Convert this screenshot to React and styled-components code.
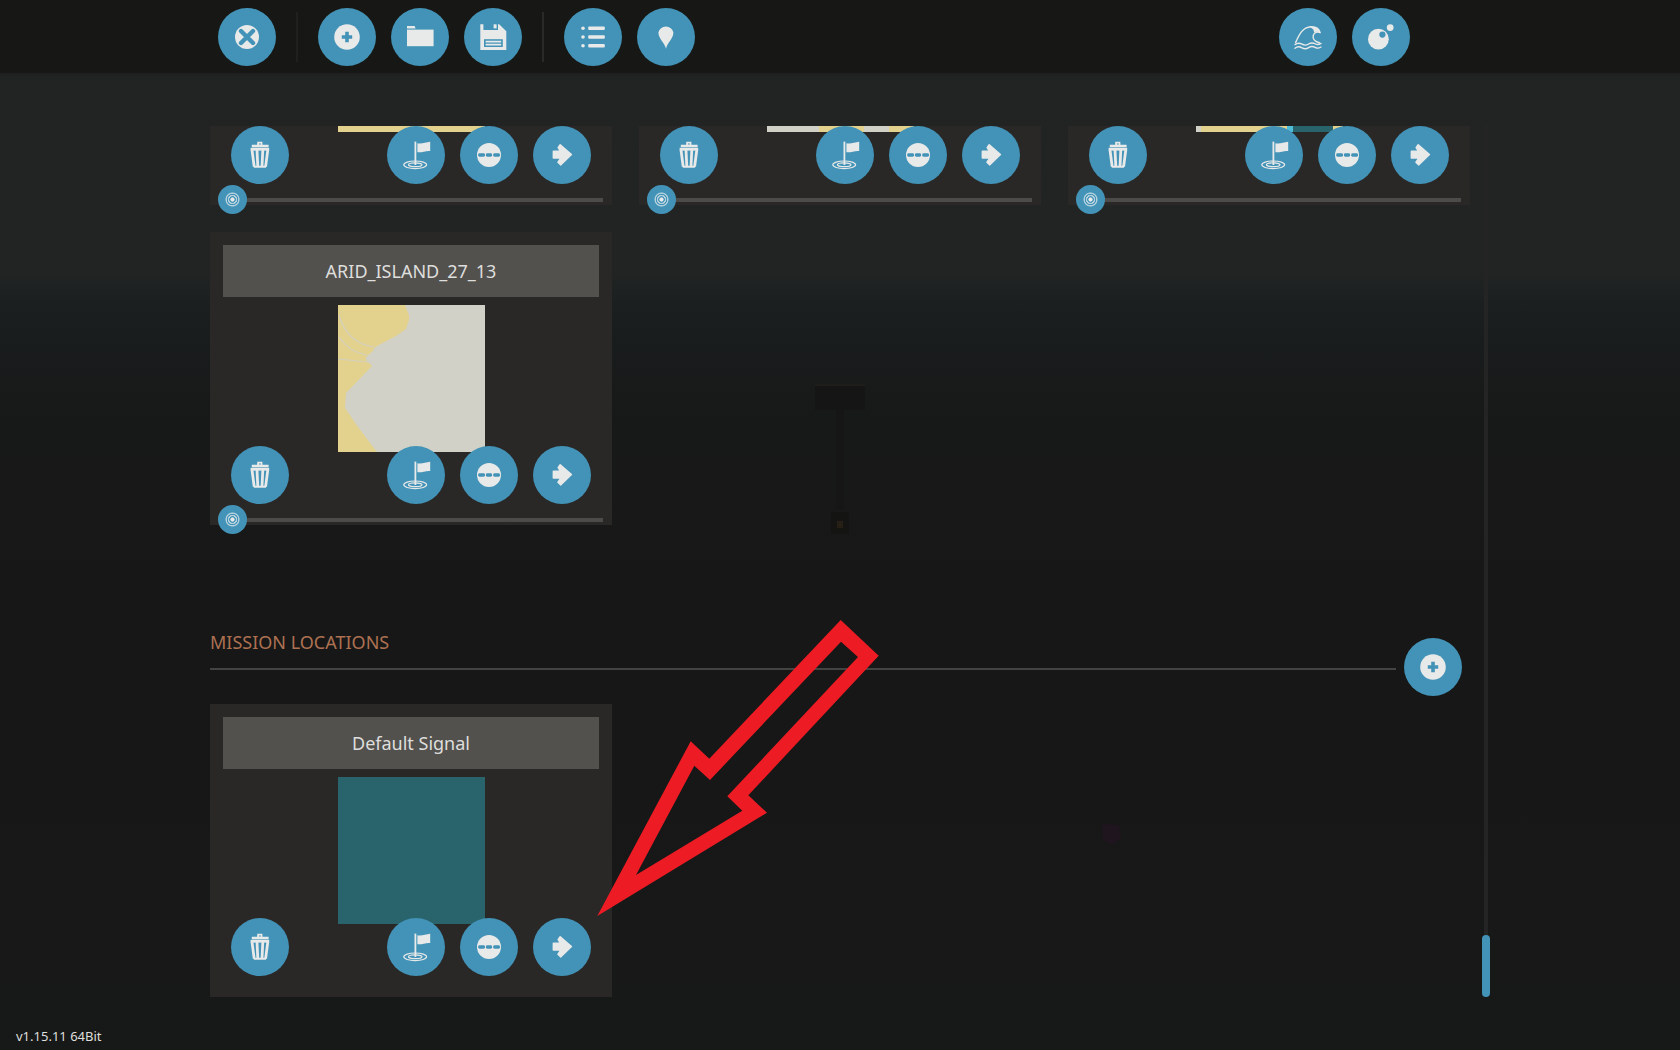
import React from 'react';
import styled, { createGlobalStyle } from 'styled-components';

const BLUE = '#4293b7';
const LIGHT = '#e8e9e9';

const GlobalStyle = createGlobalStyle`
  * {
    box-sizing: border-box;
  }
  body {
    margin: 0;
    background: #171817;
    color: #dededc;
    font-family: 'Noto Sans', sans-serif;
  }
`;

const Page = styled.div`
  position: relative;
  display: flex;
  flex-direction: column;
  height: 100vh;
  overflow: hidden;
  background: linear-gradient(
    #212322 0%,
    #222423 19%,
    #212423 26%,
    #1b1f1f 29%,
    #191c1c 33%,
    #171918 40%,
    #171717 55%,
    #171717 75%,
    #171918 100%
  );
`;

const Scene = styled.svg`
  position: absolute;
  top: 0;
  left: 0;
  width: 100%;
  height: 100%;
`;

const Toolbar = styled.header`
  position: relative;
  display: flex;
  justify-content: space-between;
  padding: 8px calc(12.5% + 60px) 7px calc(12.5% + 8px);
  background: #171815;
  box-shadow: 0 0 3px #1b1c1a;
`;

const ToolGroup = styled.div`
  display: flex;
  align-items: center;
  gap: 15px;
`;

const Divider = styled.span`
  width: 2px;
  height: 50px;
  margin: 0 5px;
  background: ${({ $faint }) => ($faint ? '#20211f' : '#2a2b29')};
`;

const RoundButton = styled.button`
  display: block;
  flex: none;
  width: 58px;
  height: 58px;
  padding: 0;
  border: 0;
  border-radius: 50%;
  background: ${BLUE};
  cursor: pointer;

  svg {
    display: block;
  }
`;

const Main = styled.main`
  position: relative;
  flex: 1;
  min-height: 0;
  display: grid;
  grid-template-columns: 1fr 75% 1fr;
  grid-template-rows: minmax(0, 1fr);
  padding-top: 53px;
`;

// column-reverse keeps the list scrolled to its end when it opens
const ScrollArea = styled.div`
  grid-column: 2;
  display: flex;
  flex-direction: column-reverse;
  overflow-y: auto;
  scrollbar-width: none;
`;

const Rail = styled.div`
  display: flex;
  align-items: flex-end;
  justify-content: center;
  width: 8px;
  margin-left: 12px;
  background: linear-gradient(#242424, #242424) center / 4px 100% no-repeat;
`;

const RailThumb = styled.div`
  width: 8px;
  height: 62px;
  border-radius: 4px;
  background: ${BLUE};
`;

const CardGrid = styled.div`
  display: grid;
  grid-template-columns: repeat(3, 1fr);
  gap: 27px;
`;

const Card = styled.article`
  padding: 13px 13px 21px;
  background: #2a2827;
`;

const NameInput = styled.input`
  display: block;
  width: 100%;
  height: 52px;
  padding: 0 12px;
  border: 0;
  background: #53514e;
  color: #dededc;
  font-family: inherit;
  font-size: 18px;
  text-align: center;
`;

const TileMap = styled.svg`
  display: block;
  width: 147px;
  height: 147px;
  margin: 8px auto -6px;
`;

const CardActions = styled.div`
  position: relative;
  display: flex;
  gap: 15px;
  padding: 0 8px;

  button:first-child {
    margin-right: auto;
  }
`;

const Slider = styled.input`
  position: relative;
  display: block;
  appearance: none;
  width: calc(100% + 9px);
  height: 29px;
  margin: 1px -4px -30px -5px;
  background: linear-gradient(#4d4b49, #4d4b49) right / calc(100% - 16px) 4px no-repeat;
  cursor: pointer;

  &::-webkit-slider-thumb {
    appearance: none;
    width: 29px;
    height: 29px;
    border-radius: 50%;
    background: radial-gradient(
      circle,
      #e8e9e9 0 1.8px,
      ${BLUE} 2.4px 3px,
      #b4d1de 3.6px 4.4px,
      ${BLUE} 5px 5.4px,
      #b4d1de 6px 6.6px,
      ${BLUE} 7.4px
    );
  }
`;

const Section = styled.section`
  position: relative;
  margin-top: 105px;
`;

const SectionHead = styled.div`
  display: flex;
  align-items: flex-start;

  button {
    margin: 8px;
  }
`;

const SectionTitle = styled.h2`
  flex: 1;
  margin: 0;
  padding-bottom: 14px;
  border-bottom: 2px solid #434342;
  color: #ad7152;
  font-size: 18px;
  font-weight: 400;
  line-height: 24px;
`;

const Pointer = styled.svg`
  position: absolute;
  top: -10px;
  left: 387px;
  width: 282px;
  height: 296px;
  pointer-events: none;
`;

const Footer = styled.footer`
  position: relative;
  padding: 30px 16px 5px;
  font-size: 13px;
  line-height: 18px;
`;

// Icons share a box of 58 units with its origin in the middle.
const Glyph = ({ children }) => (
  <svg width="58" height="58" viewBox="-29 -29 58 58" fill={LIGHT} aria-hidden="true">
    {children}
  </svg>
);

const CloseIcon = () => (
  <Glyph>
    <circle r="12" />
    <path d="M-6 -6L6 6M6 -6L-6 6" stroke={BLUE} strokeWidth="4.4" strokeLinecap="round" />
  </Glyph>
);

const PlusIcon = () => (
  <Glyph>
    <circle r="12.8" />
    <path d="M0 -5.2V5.2M-5.2 0H5.2" stroke={BLUE} strokeWidth="3.6" />
  </Glyph>
);

const FolderIcon = () => (
  <Glyph>
    <path d="M-13 -11H-5.4L-4.4 -8.6H-13Z" />
    <path d="M-13 -7.4H13.6V9.2H-13Z" />
  </Glyph>
);

const SaveIcon = () => (
  <Glyph>
    <path d="M-12.7 -12.7H-9.6V-7H5V-12.7H6.2L13.3 -5.8V13H-12.7Z" />
    <path d="M0.6 -12.7H3.6V-8.6H0.6Z" />
    <path d="M-9 2.2H9.8V10H-9Z" fill={BLUE} />
    <path d="M-7.4 3.8H8.2V5.4H-7.4ZM-7.4 6.8H8.2V8.4H-7.4Z" />
  </Glyph>
);

const ListIcon = () => (
  <Glyph>
    {[-8.8, 0, 8.8].map((y) => (
      <g key={y}>
        <circle cx="-10" cy={y} r="1.8" />
        <rect x="-4.8" y={y - 1.7} width="16.6" height="3.4" rx="1" />
      </g>
    ))}
  </Glyph>
);

const PinIcon = () => (
  <Glyph>
    <path d="M0 11.8C-1.4 6 -7.6 1.6 -7.6 -4.4A7.6 7.4 0 0 1 7.4 -4.4C7.4 1.6 1.2 6 0 11.8Z" />
  </Glyph>
);

const WaveIcon = () => (
  <Glyph>
    <g fill="none" stroke={LIGHT} strokeWidth="1.4" strokeLinecap="round" strokeLinejoin="round">
      <path d="M-12.4 5.6C-9 -2 -5.6 -9.8 3 -10.2C7.6 -10.4 11 -8 12.2 -4.4C9.4 -5.8 6 -4.6 5.2 -1.4C4.6 1.8 7 4.6 11.4 5.8" />
      <path d="M-13 7.6C-10.4 5.6 -8.4 5.8 -6 7.2S-1.6 8.4 0.6 7 5.4 5.8 7.6 7 11 7.6 13 6.4" />
      <path d="M-13 11.2C-10.4 9.2 -8.4 9.4 -6 10.8S-1.6 12 0.6 10.6 5.4 9.4 7.6 10.6 11 11.2 13 10" />
    </g>
    <path d="M1 -10.2C7 -11.2 11.6 -8.4 12.4 -4.2C9.8 -5.8 7.8 -5.6 6 -4.2C6.4 -7.2 4 -9 1 -10.2Z" />
  </Glyph>
);

const BubbleIcon = () => (
  <Glyph>
    <circle cx="-2.6" cy="2.2" r="10.4" />
    <circle cx="1.4" cy="-2.4" r="3.1" fill={BLUE} />
    <circle cx="9.2" cy="-9.4" r="3.4" />
  </Glyph>
);

const TrashIcon = () => (
  <Glyph>
    <path d="M-2.8 -10.2V-13.2H2.4V-10.2H8.6V-7.8H-8.2V-10.2ZM-1 -10.6H0.8V-11.6H-1Z" fillRule="evenodd" />
    <path d="M-9.4 -7.2H9.2V-4.4H-9.4Z" />
    <path
      d="M-8 -5L-5.8 11.6M-3 -5L-2.2 11.6M2.8 -5L2 11.6M7.8 -5L5.6 11.6"
      stroke={LIGHT}
      strokeWidth="2.8"
    />
    <path d="M-6.8 10.8H6.6L5.8 12.8H-6Z" />
  </Glyph>
);

const FlagIcon = () => (
  <Glyph>
    <path d="M-1.5 -13.4H0.3V10H-1.5Z" />
    <path d="M1.4 -11.8C5.4 -10.6 9.6 -12.8 14.2 -13.2V-4C10 -4.6 6 -2.2 1.4 -2.8Z" />
    <g fill="none" stroke={LIGHT} strokeWidth="1.2">
      <ellipse cx="-0.8" cy="9.8" rx="11.4" ry="3.8" />
      <ellipse cx="-0.8" cy="9.8" rx="6.8" ry="1.9" />
    </g>
  </Glyph>
);

const DashIcon = () => (
  <Glyph>
    <circle r="12" />
    <g fill={BLUE}>
      <rect x="-10.8" y="-1.7" width="6.8" height="3.4" rx="1.4" />
      <rect x="-3.1" y="-1.7" width="6.2" height="3.4" rx="1.4" />
      <rect x="4.2" y="-1.7" width="6.8" height="3.4" rx="1.4" />
    </g>
  </Glyph>
);

const ArrowIcon = () => (
  <Glyph>
    <path
      d="M-8.6 -3.6H-1.4L-3.8 -7.4L-1.8 -10.2L9.4 -0.5L-1.4 9.8L-4 7.2L-1 3H-8.6Z"
      stroke={LIGHT}
      strokeWidth="1.6"
      strokeLinejoin="round"
    />
  </Glyph>
);

const SAND = '#e3d18e';
const ROCK = '#d1d1c8';

const maps = {
  sand: <rect width="147" height="147" fill={SAND} />,
  rocky: (
    <>
      <rect width="147" height="147" fill={ROCK} />
      <path d="M52 120H97V147H52ZM122 120H147V147H122Z" fill={SAND} />
    </>
  ),
  shore: (
    <>
      <rect width="147" height="147" fill={SAND} />
      <path d="M0 120H5V147H0Z" fill={ROCK} />
      <path d="M91 120H97V147H91Z" fill="#4fbcd8" />
      <path d="M97 120H137V147H97Z" fill="#29646c" />
    </>
  ),
  arid: (
    <>
      <rect width="147" height="147" fill={ROCK} />
      <path
        d="M0 0H67L71 10V15L68 24L58 31L41 40L36 43L35 46L28 52V55L34 61L8 88L7 103L20 122L39 147H0Z"
        fill={SAND}
      />
      <path
        d="M1 10C6 28 18 40 36 42M1 32C8 42 16 48 29 50M0 54L30 57"
        fill="none"
        stroke={ROCK}
        strokeWidth="1.2"
        opacity="0.8"
      />
    </>
  ),
  sea: <rect width="147" height="147" fill="#29646c" />,
};

const tiles = [
  { name: 'ARID_ISLAND_24_13', map: 'sand' },
  { name: 'ARID_ISLAND_25_13', map: 'rocky' },
  { name: 'ARID_ISLAND_26_13', map: 'shore' },
  { name: 'ARID_ISLAND_27_13', map: 'arid' },
];

const LocationCard = ({ name, map, slider }) => (
  <Card>
    <NameInput type="text" defaultValue={name} aria-label="Location name" />
    <TileMap viewBox="0 0 147 147">{maps[map]}</TileMap>
    <CardActions>
      <RoundButton aria-label="Delete"><TrashIcon /></RoundButton>
      <RoundButton aria-label="Set spawn"><FlagIcon /></RoundButton>
      <RoundButton aria-label="Options"><DashIcon /></RoundButton>
      <RoundButton aria-label="Open"><ArrowIcon /></RoundButton>
    </CardActions>
    {slider && <Slider type="range" min="0" max="100" defaultValue="0" aria-label="Radius" />}
  </Card>
);

const App = () => {
  return (
    <Page>
      <GlobalStyle />
      <Scene viewBox="0 0 1680 1050" preserveAspectRatio="xMidYMid slice" aria-hidden="true">
        <path d="M815 386H865V410H815Z" fill="#141514" />
        <path d="M815 384H865V386H815Z" fill="#1f1d1a" />
        <path d="M836 410H844V510H836Z" fill="#151615" />
        <path d="M831 512H849V534H831Z" fill="#141413" />
        <path d="M837 521H843V528H837Z" fill="#261f15" />
        <path d="M1102 824L1119 825L1121 839L1112 845L1103 840Z" fill="#1f151e" />
      </Scene>
      <Toolbar>
        <ToolGroup>
          <RoundButton aria-label="Close"><CloseIcon /></RoundButton>
          <Divider $faint />
          <RoundButton aria-label="New"><PlusIcon /></RoundButton>
          <RoundButton aria-label="Open folder"><FolderIcon /></RoundButton>
          <RoundButton aria-label="Save"><SaveIcon /></RoundButton>
          <Divider />
          <RoundButton aria-label="Missions"><ListIcon /></RoundButton>
          <RoundButton aria-label="Locations"><PinIcon /></RoundButton>
        </ToolGroup>
        <ToolGroup>
          <RoundButton aria-label="Ocean"><WaveIcon /></RoundButton>
          <RoundButton aria-label="Moon"><BubbleIcon /></RoundButton>
        </ToolGroup>
      </Toolbar>
      <Main>
        <ScrollArea>
          <div>
            <CardGrid>
              {tiles.map((tile) => (
                <LocationCard key={tile.name} name={tile.name} map={tile.map} slider />
              ))}
            </CardGrid>
            <Section>
              <SectionHead>
                <SectionTitle>MISSION LOCATIONS</SectionTitle>
                <RoundButton aria-label="Add location"><PlusIcon /></RoundButton>
              </SectionHead>
              <CardGrid>
                <LocationCard name="Default Signal" map="sea" />
              </CardGrid>
              <Pointer viewBox="0 0 282 296" aria-hidden="true">
                <path
                  d="M243.7 0L281.7 35.7L151.3 175.3L170 192.7L0.3 296L93.7 121.3L112.3 138.7ZM244 21.7L261 37L130.3 176.3L145.3 190.7L39 255L97.3 145.7L113 160Z"
                  fill="#ed1c24"
                  fillRule="evenodd"
                />
              </Pointer>
            </Section>
          </div>
        </ScrollArea>
        <Rail>
          <RailThumb />
        </Rail>
      </Main>
      <Footer>v1.15.11 64Bit</Footer>
    </Page>
  );
};

export default App;
